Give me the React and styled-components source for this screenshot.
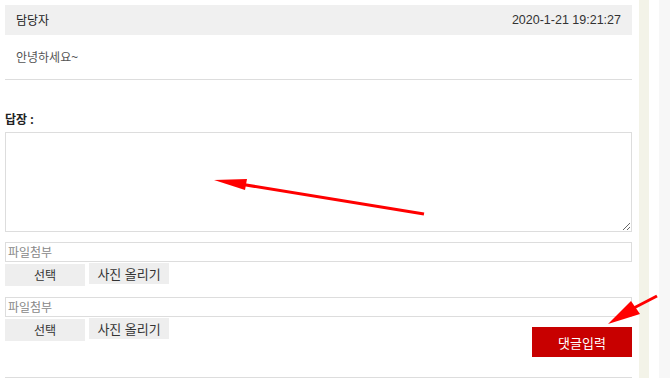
import React from "react";
import styled, { createGlobalStyle } from "styled-components";

const Global = createGlobalStyle`
  html, body { margin: 0; padding: 0; background: #fff; }
  body { font-family: "Noto Sans", "Noto Sans CJK KR", sans-serif; width: 670px; height: 378px; overflow: hidden; }
  * { box-sizing: border-box; }
`;

const Page = styled.div`
  display: flex;
  width: 670px;
  height: 378px;
  position: relative;
`;

const Main = styled.div`
  width: 627px;
  margin-left: 5px;
  padding-top: 5px;
  display: flex;
  flex-direction: column;
`;

const Gutter = styled.div`
  width: ${(p) => p.w}px;
  margin-left: ${(p) => p.ml}px;
  background: ${(p) => p.bg};
  height: 100%;
`;

const Header = styled.div`
  height: 30px;
  background: #f0f0f0;
  display: flex;
  align-items: center;
  justify-content: space-between;
  padding: 0 11px;
  font-size: 12px;
  color: #222;
`;

const DateText = styled.span`
  font-family: "Liberation Sans", "Noto Sans", sans-serif;
  font-size: 12.5px;
  color: #333;
`;

const Body = styled.div`
  height: 45px;
  display: flex;
  align-items: center;
  padding-left: 11px;
  font-size: 12px;
  color: #555;
  border-bottom: 1px solid #ddd;
`;

const Label = styled.div`
  margin-top: 31px;
  font-size: 12px;
  font-weight: bold;
  color: #222;
  height: 18px;
  line-height: 18px;
`;

const TextArea = styled.textarea`
  margin-top: 3px;
  width: 100%;
  height: 100px;
  border: 1px solid #ddd;
  resize: vertical;
  display: block;
  outline: none;
`;

const FileBox = styled.div`
  margin-top: ${(p) => p.mt}px;
  height: 20px;
  border: 1px solid #ddd;
  font-size: 12px;
  color: #888;
  padding-left: 2px;
  display: flex;
  align-items: center;
`;

const Row = styled.div`
  display: flex;
  justify-content: space-between;
  align-items: flex-start;
`;

const Buttons = styled.div`
  display: flex;
  gap: 4px;
  align-items: flex-start;
`;

const GrayBtn = styled.div`
  width: 80px;
  height: ${(p) => p.h}px;
  margin-top: ${(p) => p.mt}px;
  background: #eeeeee;
  color: #333;
  font-size: ${(p) => p.fs}px;
  display: flex;
  align-items: center;
  justify-content: center;
`;

const Submit = styled.div`
  margin-top: 10px;
  width: 100px;
  height: 30px;
  background: #c80000;
  color: #fff;
  font-size: 13px;
  display: flex;
  align-items: center;
  justify-content: center;
`;

const Bottom = styled.div`
  margin-top: 20px;
  border-bottom: 1px solid #ddd;
`;

const Overlay = styled.svg`
  position: absolute;
  left: 0;
  top: 0;
  pointer-events: none;
`;

export default function App() {
  return (
    <>
      <Global />
      <Page>
        <Main>
          <Header>
            <span>담당자</span>
            <DateText>2020-1-21 19:21:27</DateText>
          </Header>
          <Body>안녕하세요~</Body>
          <Label>답장 :</Label>
          <TextArea />
          <FileBox mt={10}>파일첨부</FileBox>
          <Row>
            <Buttons>
              <GrayBtn h={22} mt={2} fs={12}>선택</GrayBtn>
              <GrayBtn h={21} mt={1} fs={13}>사진 올리기</GrayBtn>
            </Buttons>
          </Row>
          <FileBox mt={11}>파일첨부</FileBox>
          <Row>
            <Buttons>
              <GrayBtn h={22} mt={2} fs={12}>선택</GrayBtn>
              <GrayBtn h={21} mt={1} fs={13}>사진 올리기</GrayBtn>
            </Buttons>
            <Submit>댓글입력</Submit>
          </Row>
          <Bottom />
        </Main>
        <Gutter w={10} ml={7} bg="#f3f3e8" />
        <Gutter w={11} ml={10} bg="#f7f7f7" />
        <Overlay width="670" height="378" viewBox="0 0 670 378">
          <line x1="424" y1="214" x2="240" y2="184" stroke="#ff0000" strokeWidth="3" />
          <polygon points="214,180 247,179 245,190" fill="#ff0000" />
          <line x1="657" y1="296" x2="628" y2="311" stroke="#ff0000" strokeWidth="3" />
          <polygon points="608,324 631,301 640,314" fill="#ff0000" />
        </Overlay>
      </Page>
    </>
  );
}
